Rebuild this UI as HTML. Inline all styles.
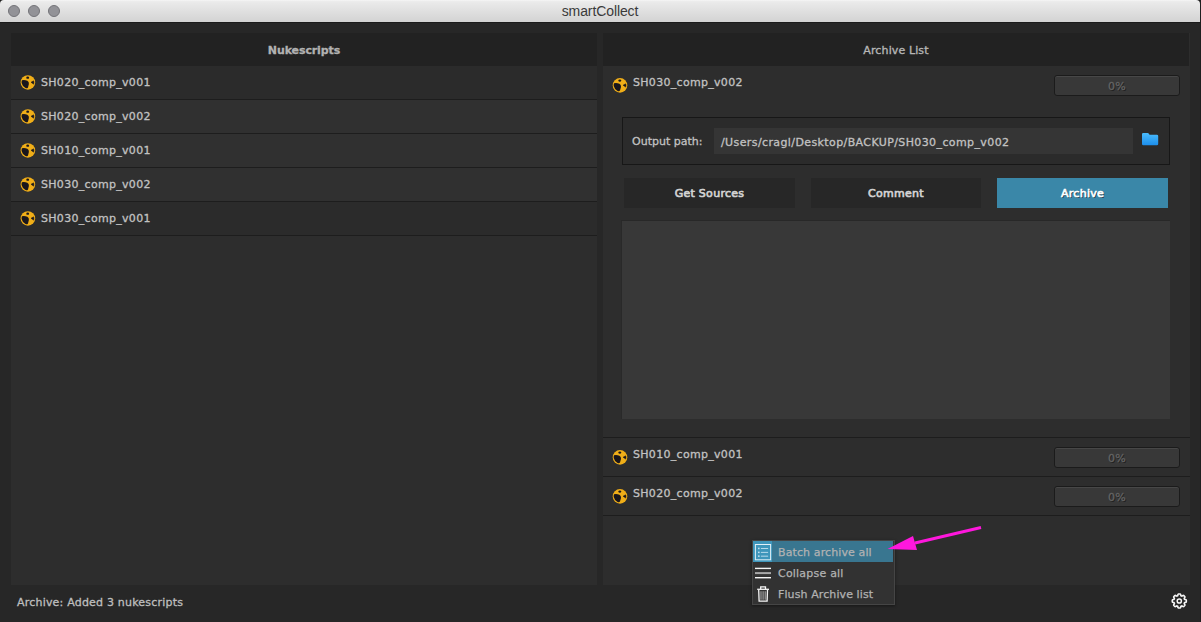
<!DOCTYPE html>
<html>
<head>
<meta charset="utf-8">
<title>smartCollect</title>
<style>
*{box-sizing:border-box;margin:0;padding:0}
html,body{width:1201px;height:622px;overflow:hidden;background:#272727}
body{position:relative;font-family:"DejaVu Sans","Liberation Sans",sans-serif;font-size:11px;color:#c2c2c2}
.abs{position:absolute}
#corner{left:0;top:0;width:1201px;height:8px;background:#1c1c1c}
#titlebar{left:0;top:0;width:1200px;height:22px;background:linear-gradient(#f6f6f6 0,#ececec 1.5px,#e9e9e9 3px,#d3d3d3 22px);border-radius:4px 4px 0 0}
.dot{width:12px;height:12px;border-radius:50%;background:#929297;border:1px solid #737378;top:5px}
#title{left:0;top:3.2px;width:1200px;height:16px;line-height:16px;text-align:center;font-family:"Liberation Sans",sans-serif;font-size:14px;letter-spacing:-.1px;color:#3a3a3a}
.hdr{background:#222;height:33px;top:33px}
.t{position:absolute;white-space:nowrap;line-height:14px;height:14px;color:#c2c2c2;letter-spacing:.3px;-webkit-text-stroke:.3px #c2c2c2}
.c{text-align:center}
.row{left:11px;width:586px;height:34px;border-bottom:1px solid #1d1d1d}
.nk{position:absolute;width:16px;height:16px}
.pb{width:126px;height:21px;border:1px solid #1b1b1b;border-radius:3px;background:#383838;box-shadow:inset 0 1px 0 #474747}
.pbt{position:absolute;width:126px;text-align:center;line-height:14px;height:14px;font-size:11px;color:#646464;letter-spacing:.2px;-webkit-text-stroke:.3px #646464;text-shadow:1px 1px 0 #1e1e1e}
.btn{height:30px;background:#272727;top:178px}
.bt{position:absolute;top:187px;line-height:14px;height:14px;text-align:center;color:#d4d4d4;letter-spacing:.28px;-webkit-text-stroke:.65px #d4d4d4}
.sep{left:603px;width:587px;height:1px;background:#1d1d1d}
.mt{position:absolute;left:778px;line-height:14px;height:14px;white-space:nowrap;color:#b2b2b2;-webkit-text-stroke:.25px #b2b2b2}
</style>
</head>
<body>
<div id="corner" class="abs"></div>
<div id="titlebar" class="abs"></div>
<div class="abs dot" style="left:8px"></div>
<div class="abs dot" style="left:28px"></div>
<div class="abs dot" style="left:48px"></div>
<div id="title" class="abs">smartCollect</div>

<div class="abs" style="left:1200px;top:0;width:1px;height:622px;background:#1f1f1f"></div>
<div class="abs" style="left:0;top:22px;width:1201px;height:1px;background:#1b1b1b"></div>
<!-- left panel -->
<div class="abs" style="left:11px;top:33px;width:586px;height:552px;background:#2d2d2d"></div>
<div class="abs hdr" style="left:11px;width:586px"></div>
<div class="t c" style="left:11px;width:586px;top:44px;font-weight:bold;letter-spacing:-.1px;color:#b2b2b2;-webkit-text-stroke:.3px #b2b2b2">Nukescripts</div>
<div class="abs row" style="top:66px;background:#2b2b2b"></div>
<div class="abs row" style="top:100px;background:#303030"></div>
<div class="abs row" style="top:134px;background:#303030"></div>
<div class="abs row" style="top:168px;background:#303030"></div>
<div class="abs row" style="top:202px;background:#2b2b2b"></div>
<div class="t" style="left:41px;top:76px">SH020_comp_v001</div>
<div class="t" style="left:41px;top:110px">SH020_comp_v002</div>
<div class="t" style="left:41px;top:144px">SH010_comp_v001</div>
<div class="t" style="left:41px;top:178px">SH030_comp_v002</div>
<div class="t" style="left:41px;top:212px">SH030_comp_v001</div>

<!-- right panel -->
<div class="abs" style="left:603px;top:33px;width:587px;height:552px;background:#2d2d2d"></div>
<div class="abs hdr" style="left:603px;width:586px"></div>
<div class="t c" style="left:603px;width:586px;top:44px;letter-spacing:.12px;color:#b6b6b6;-webkit-text-stroke:.35px #b6b6b6">Archive List</div>

<div class="t" style="left:633px;top:76px">SH030_comp_v002</div>
<div class="abs pb" style="left:1054px;top:75px"></div>
<div class="pbt" style="left:1054px;top:80px">0%</div>

<div class="abs" style="left:622px;top:117px;width:548px;height:48px;border:1px solid #171717;background:#2b2b2b"></div>
<div class="t" style="left:632px;top:135px;letter-spacing:0">Output path:</div>
<div class="abs" style="left:714px;top:128px;width:419px;height:26px;background:#353535"></div>
<div class="t" style="left:721px;top:136px;letter-spacing:.395px">/Users/cragl/Desktop/BACKUP/SH030_comp_v002</div>

<div class="abs btn" style="left:624px;width:171px"></div>
<div class="abs btn" style="left:811px;width:170px"></div>
<div class="abs btn" style="left:997px;width:171px;background:#3a87a8"></div>
<div class="bt" style="left:624px;width:171px">Get Sources</div>
<div class="bt" style="left:811px;width:170px">Comment</div>
<div class="bt" style="left:997px;width:171px;color:#fff;-webkit-text-stroke-color:#fff;text-shadow:1px 1px 0 rgba(0,0,0,.65)">Archive</div>

<div class="abs" style="left:621px;top:220px;width:549px;height:199px;background:#383838;border-top:1px solid #282828;border-left:1px solid #292929"></div>

<div class="abs sep" style="top:437px"></div>
<div class="t" style="left:633px;top:448px">SH010_comp_v001</div>
<div class="abs pb" style="left:1054px;top:447px"></div>
<div class="pbt" style="left:1054px;top:452px">0%</div>
<div class="abs sep" style="top:476px"></div>
<div class="t" style="left:633px;top:487px">SH020_comp_v002</div>
<div class="abs pb" style="left:1054px;top:486px"></div>
<div class="pbt" style="left:1054px;top:491px">0%</div>
<div class="abs sep" style="top:515px"></div>

<!-- status -->
<div class="t" style="left:17px;top:596px;letter-spacing:.2px;color:#bababa">Archive: Added 3 nukescripts</div>

<!-- menu -->
<div class="abs" style="left:752px;top:540px;width:143px;height:65px;background:#323232;border:1px solid #454545;box-shadow:0 1px 3px rgba(0,0,0,.45)"></div>
<div class="abs" style="left:753px;top:541px;width:140px;height:21px;background:#397690"></div>
<div class="abs" style="left:753px;top:541px;width:19px;height:21px;background:#3f96bb"></div>
<div class="mt" style="top:546px;letter-spacing:.11px">Batch archive all</div>
<div class="mt" style="top:567px;letter-spacing:.21px">Collapse all</div>
<div class="mt" style="top:588px;letter-spacing:.1px">Flush Archive list</div>

<svg class="abs" style="left:20px;top:74px" width="16" height="16" viewBox="-7.9 -8.45 16 16"><circle cx="0" cy="0" r="7.3" fill="#f0ae18"/><path d="M-6 -2.2 Q-3.2 -2.9 -0.6 -1.6 Q1.2 -0.6 1 1.6 L0 5.2 Q-0.9 6.2 -2.4 5.6 Q-5.4 4.1 -6.3 0.5 Q-6.4 -1 -6 -2.2Z" fill="#19161c"/><ellipse cx="-0.2" cy="-4.8" rx="1.4" ry="1.2" fill="#19161c"/><path d="M3.1 -0.2 L5.7 -1.6 Q6.3 0 5.7 1.7 Z" fill="#19161c" stroke="#19161c" stroke-width=".5" stroke-linejoin="round"/></svg>
<svg class="abs" style="left:20px;top:108px" width="16" height="16" viewBox="-7.9 -8.45 16 16"><circle cx="0" cy="0" r="7.3" fill="#f0ae18"/><path d="M-6 -2.2 Q-3.2 -2.9 -0.6 -1.6 Q1.2 -0.6 1 1.6 L0 5.2 Q-0.9 6.2 -2.4 5.6 Q-5.4 4.1 -6.3 0.5 Q-6.4 -1 -6 -2.2Z" fill="#19161c"/><ellipse cx="-0.2" cy="-4.8" rx="1.4" ry="1.2" fill="#19161c"/><path d="M3.1 -0.2 L5.7 -1.6 Q6.3 0 5.7 1.7 Z" fill="#19161c" stroke="#19161c" stroke-width=".5" stroke-linejoin="round"/></svg>
<svg class="abs" style="left:20px;top:142px" width="16" height="16" viewBox="-7.9 -8.45 16 16"><circle cx="0" cy="0" r="7.3" fill="#f0ae18"/><path d="M-6 -2.2 Q-3.2 -2.9 -0.6 -1.6 Q1.2 -0.6 1 1.6 L0 5.2 Q-0.9 6.2 -2.4 5.6 Q-5.4 4.1 -6.3 0.5 Q-6.4 -1 -6 -2.2Z" fill="#19161c"/><ellipse cx="-0.2" cy="-4.8" rx="1.4" ry="1.2" fill="#19161c"/><path d="M3.1 -0.2 L5.7 -1.6 Q6.3 0 5.7 1.7 Z" fill="#19161c" stroke="#19161c" stroke-width=".5" stroke-linejoin="round"/></svg>
<svg class="abs" style="left:20px;top:176px" width="16" height="16" viewBox="-7.9 -8.45 16 16"><circle cx="0" cy="0" r="7.3" fill="#f0ae18"/><path d="M-6 -2.2 Q-3.2 -2.9 -0.6 -1.6 Q1.2 -0.6 1 1.6 L0 5.2 Q-0.9 6.2 -2.4 5.6 Q-5.4 4.1 -6.3 0.5 Q-6.4 -1 -6 -2.2Z" fill="#19161c"/><ellipse cx="-0.2" cy="-4.8" rx="1.4" ry="1.2" fill="#19161c"/><path d="M3.1 -0.2 L5.7 -1.6 Q6.3 0 5.7 1.7 Z" fill="#19161c" stroke="#19161c" stroke-width=".5" stroke-linejoin="round"/></svg>
<svg class="abs" style="left:20px;top:210px" width="16" height="16" viewBox="-7.9 -8.45 16 16"><circle cx="0" cy="0" r="7.3" fill="#f0ae18"/><path d="M-6 -2.2 Q-3.2 -2.9 -0.6 -1.6 Q1.2 -0.6 1 1.6 L0 5.2 Q-0.9 6.2 -2.4 5.6 Q-5.4 4.1 -6.3 0.5 Q-6.4 -1 -6 -2.2Z" fill="#19161c"/><ellipse cx="-0.2" cy="-4.8" rx="1.4" ry="1.2" fill="#19161c"/><path d="M3.1 -0.2 L5.7 -1.6 Q6.3 0 5.7 1.7 Z" fill="#19161c" stroke="#19161c" stroke-width=".5" stroke-linejoin="round"/></svg>
<svg class="abs" style="left:612px;top:77px" width="16" height="16" viewBox="-8 -8.4 16 16"><circle cx="0" cy="0" r="7.3" fill="#f0ae18"/><path d="M-6 -2.2 Q-3.2 -2.9 -0.6 -1.6 Q1.2 -0.6 1 1.6 L0 5.2 Q-0.9 6.2 -2.4 5.6 Q-5.4 4.1 -6.3 0.5 Q-6.4 -1 -6 -2.2Z" fill="#19161c"/><ellipse cx="-0.2" cy="-4.8" rx="1.4" ry="1.2" fill="#19161c"/><path d="M3.1 -0.2 L5.7 -1.6 Q6.3 0 5.7 1.7 Z" fill="#19161c" stroke="#19161c" stroke-width=".5" stroke-linejoin="round"/></svg>
<svg class="abs" style="left:612px;top:449px" width="16" height="16" viewBox="-8 -8.4 16 16"><circle cx="0" cy="0" r="7.3" fill="#f0ae18"/><path d="M-6 -2.2 Q-3.2 -2.9 -0.6 -1.6 Q1.2 -0.6 1 1.6 L0 5.2 Q-0.9 6.2 -2.4 5.6 Q-5.4 4.1 -6.3 0.5 Q-6.4 -1 -6 -2.2Z" fill="#19161c"/><ellipse cx="-0.2" cy="-4.8" rx="1.4" ry="1.2" fill="#19161c"/><path d="M3.1 -0.2 L5.7 -1.6 Q6.3 0 5.7 1.7 Z" fill="#19161c" stroke="#19161c" stroke-width=".5" stroke-linejoin="round"/></svg>
<svg class="abs" style="left:612px;top:488px" width="16" height="16" viewBox="-8 -8.4 16 16"><circle cx="0" cy="0" r="7.3" fill="#f0ae18"/><path d="M-6 -2.2 Q-3.2 -2.9 -0.6 -1.6 Q1.2 -0.6 1 1.6 L0 5.2 Q-0.9 6.2 -2.4 5.6 Q-5.4 4.1 -6.3 0.5 Q-6.4 -1 -6 -2.2Z" fill="#19161c"/><ellipse cx="-0.2" cy="-4.8" rx="1.4" ry="1.2" fill="#19161c"/><path d="M3.1 -0.2 L5.7 -1.6 Q6.3 0 5.7 1.7 Z" fill="#19161c" stroke="#19161c" stroke-width=".5" stroke-linejoin="round"/></svg>
<svg class="abs" style="left:1141px;top:132px" width="18" height="14" viewBox="0 0 18 14"><linearGradient id="fg" x1="0" y1="0" x2="0" y2="1"><stop offset="0" stop-color="#4bbcfc"/><stop offset="1" stop-color="#1c8eec"/></linearGradient><path d="M1 2.2 Q1 1 2.2 1 L6.6 1 Q7.4 1 7.9 1.8 L8.5 2.7 L15.8 2.7 Q17.2 2.7 17.2 4 L17.2 12 Q17.2 13.3 15.8 13.3 L2.4 13.3 Q1 13.3 1 12Z" fill="url(#fg)"/></svg>
<svg class="abs" style="left:754px;top:543px" width="18" height="18" viewBox="0 0 18 18"><rect x="1.4" y="1.5" width="15.2" height="15.3" fill="none" stroke="#e2f0f7" stroke-width="1"/><g fill="#c4e2f0"><rect x="4" y="4.7" width="1.6" height="1.5"/><rect x="4" y="8.6" width="1.6" height="1.5"/><rect x="4" y="12.4" width="1.6" height="1.5"/><rect x="6.9" y="5" width="7.2" height=".9"/><rect x="6.9" y="8.9" width="7.2" height=".9"/><rect x="6.9" y="12.7" width="7.2" height=".9"/></g></svg>
<svg class="abs" style="left:754px;top:564px" width="18" height="18" viewBox="0 0 18 18"><rect x="1" y="3.7" width="16" height="1.4" fill="#f4f4f4"/><rect x="1" y="8.1" width="16" height="2" fill="#a8a8a8"/><rect x="1" y="13" width="16" height="1.4" fill="#f4f4f4"/></svg>
<svg class="abs" style="left:754px;top:585px" width="18" height="18" viewBox="0 0 18 18"><g fill="none" stroke="#f6f6f6" stroke-width="1.3"><path d="M6.7 4 L6.7 1.9 L11.5 1.9 L11.5 4"/><path d="M3.2 4.3 L15 4.3"/><path d="M4.7 5 L5.1 16.2 L13.1 16.2 L13.5 5"/></g><g stroke="#a6a6a6" stroke-width="1.1"><path d="M7 6.3V14.8M9.1 6.3V14.8M11.2 6.3V14.8"/></g></svg>
<svg class="abs" style="left:1169px;top:591px" width="20" height="20" viewBox="-10.3 -10 20 20"><path d="M7.04 0.00 L7.04 0.28 L7.02 0.55 L6.97 0.82 L6.86 1.09 L6.56 1.31 L6.01 1.44 L5.51 1.55 L5.24 1.70 L5.11 1.88 L5.01 2.08 L4.94 2.28 L4.91 2.50 L4.99 2.80 L5.27 3.23 L5.56 3.72 L5.62 4.08 L5.51 4.34 L5.35 4.57 L5.17 4.78 L4.98 4.98 L4.78 5.17 L4.57 5.35 L4.34 5.51 L4.08 5.62 L3.72 5.56 L3.23 5.27 L2.80 4.99 L2.50 4.91 L2.28 4.94 L2.08 5.01 L1.88 5.11 L1.70 5.24 L1.55 5.51 L1.44 6.01 L1.31 6.56 L1.09 6.86 L0.82 6.97 L0.55 7.02 L0.28 7.04 L0.00 7.04 L-0.28 7.04 L-0.55 7.02 L-0.82 6.97 L-1.09 6.86 L-1.31 6.56 L-1.44 6.01 L-1.55 5.51 L-1.70 5.24 L-1.88 5.11 L-2.08 5.01 L-2.28 4.94 L-2.50 4.91 L-2.80 4.99 L-3.23 5.27 L-3.72 5.56 L-4.08 5.62 L-4.34 5.51 L-4.57 5.35 L-4.78 5.17 L-4.98 4.98 L-5.17 4.78 L-5.35 4.57 L-5.51 4.34 L-5.62 4.08 L-5.56 3.72 L-5.27 3.23 L-4.99 2.80 L-4.91 2.50 L-4.94 2.28 L-5.01 2.08 L-5.11 1.88 L-5.24 1.70 L-5.51 1.55 L-6.01 1.44 L-6.56 1.31 L-6.86 1.09 L-6.97 0.82 L-7.02 0.55 L-7.04 0.28 L-7.04 0.00 L-7.04 -0.28 L-7.02 -0.55 L-6.97 -0.82 L-6.86 -1.09 L-6.56 -1.31 L-6.01 -1.44 L-5.51 -1.55 L-5.24 -1.70 L-5.11 -1.88 L-5.01 -2.08 L-4.94 -2.28 L-4.91 -2.50 L-4.99 -2.80 L-5.27 -3.23 L-5.56 -3.72 L-5.62 -4.08 L-5.51 -4.34 L-5.35 -4.57 L-5.17 -4.78 L-4.98 -4.98 L-4.78 -5.17 L-4.57 -5.35 L-4.34 -5.51 L-4.08 -5.62 L-3.72 -5.56 L-3.23 -5.27 L-2.80 -4.99 L-2.50 -4.91 L-2.28 -4.94 L-2.08 -5.01 L-1.88 -5.11 L-1.70 -5.24 L-1.55 -5.51 L-1.44 -6.01 L-1.31 -6.56 L-1.09 -6.86 L-0.82 -6.97 L-0.55 -7.02 L-0.28 -7.04 L-0.00 -7.04 L0.28 -7.04 L0.55 -7.02 L0.82 -6.97 L1.09 -6.86 L1.31 -6.56 L1.44 -6.01 L1.55 -5.51 L1.70 -5.24 L1.88 -5.11 L2.08 -5.01 L2.28 -4.94 L2.50 -4.91 L2.80 -4.99 L3.23 -5.27 L3.72 -5.56 L4.08 -5.62 L4.34 -5.51 L4.57 -5.35 L4.78 -5.17 L4.98 -4.98 L5.17 -4.78 L5.35 -4.57 L5.51 -4.34 L5.62 -4.08 L5.56 -3.72 L5.27 -3.23 L4.99 -2.80 L4.91 -2.50 L4.94 -2.28 L5.01 -2.08 L5.11 -1.88 L5.24 -1.70 L5.51 -1.55 L6.01 -1.44 L6.56 -1.31 L6.86 -1.09 L6.97 -0.82 L7.02 -0.55 L7.04 -0.28Z" fill="none" stroke="#f6f6f6" stroke-width="1.6" stroke-linejoin="round"/><circle cx="0" cy="0" r="2.1" fill="none" stroke="#f6f6f6" stroke-width="1.5"/></svg>
<!-- arrow -->
<svg class="abs" style="left:880px;top:515px" width="120" height="50" viewBox="0 0 120 50">
<line x1="101" y1="12.5" x2="35" y2="28" stroke="#ff17dd" stroke-width="3"/>
<polygon points="7.5,34 33,21 37,35" fill="#ff17dd"/>
</svg>
</body>
</html>
